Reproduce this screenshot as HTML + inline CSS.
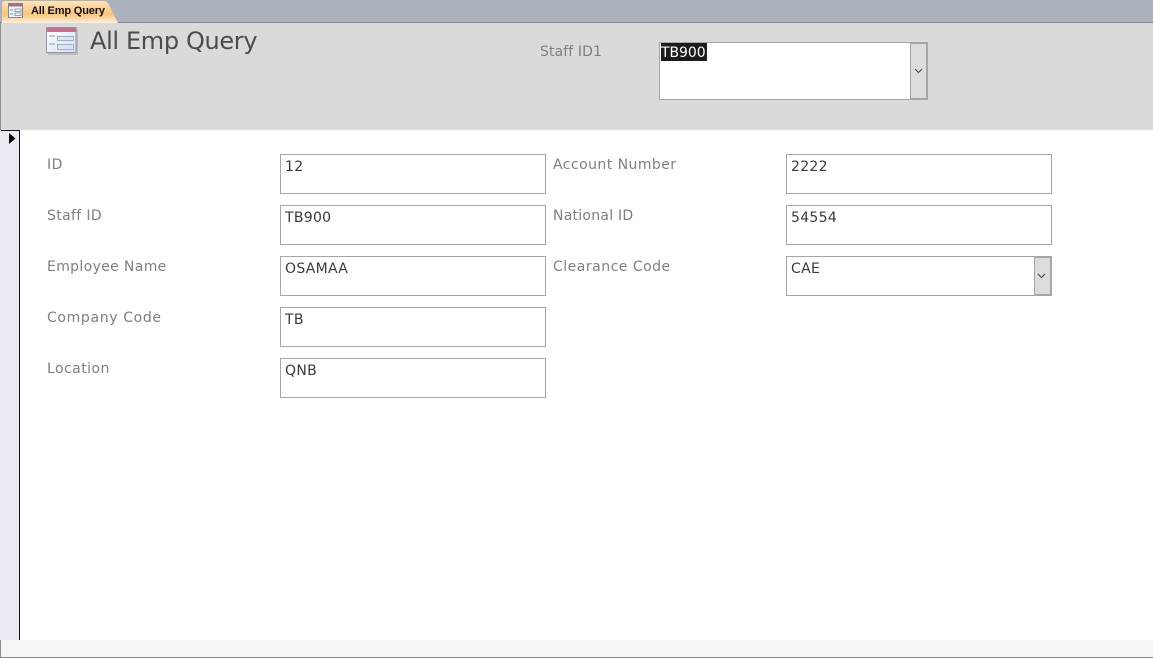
<!DOCTYPE html>
<html><head><meta charset="utf-8"><style>
html,body{margin:0;padding:0}
body{width:1153px;height:658px;overflow:hidden;background:#fff;position:relative;font-family:"DejaVu Sans","Liberation Sans",sans-serif}
div{position:absolute;box-sizing:border-box}
svg{position:absolute;left:0;top:0}
.l{font-size:14px;color:#7f7f7f;line-height:18px;white-space:nowrap;letter-spacing:.45px}
.b{border:1px solid #a6a6a6;background:#fff;height:40px;width:266px;font-size:14px;color:#3a3a3a;padding:3px 0 0 4px;line-height:18px;letter-spacing:.3px}
</style></head><body>
<div style="left:0;top:0;width:1153px;height:23px;background:#abb2be;border-bottom:1px solid #858b96"></div>
<div style="left:0;top:23px;width:1153px;height:107px;background:#dadada"></div>
<div style="left:0;top:23px;width:1px;height:635px;background:#8c8c8c"></div>
<svg width="125" height="24"><defs><linearGradient id="t" x1="0" y1="0" x2="0" y2="1"><stop offset="0" stop-color="#fde3bb"/><stop offset=".6" stop-color="#fbc57c"/><stop offset="1" stop-color="#fdeed5"/></linearGradient></defs><path d="M2 23V4Q2 1 5 1H103Q107 1 109 5L118 23Z" fill="url(#t)"/></svg>
<svg width="24" height="20"><rect x="8.500" y="3.500" width="14" height="14" fill="#f4f6fb" stroke="#7e8795"/><rect x="9" y="4" width="13" height="2.500" fill="#b5687f"/><path d="M10 10h3M10 14h3" stroke="#6d7f9a"/><rect x="15" y="9" width="6" height="2.500" fill="#fff" stroke="#6d87a8" stroke-width=".8"/><rect x="15" y="13" width="6" height="2.500" fill="#fff" stroke="#6d87a8" stroke-width=".8"/></svg>
<div style="left:31px;top:4px;font:bold 11px/14px 'Liberation Sans',sans-serif;color:#111;white-space:nowrap;letter-spacing:-.15px">All Emp Query</div>
<svg width="80" height="60"><defs><linearGradient id="f" x1="0" y1="0" x2="1" y2="1"><stop offset="0" stop-color="#fff"/><stop offset="1" stop-color="#d6dfee"/></linearGradient></defs><rect x="48" y="29" width="30" height="26" fill="#a9a9a9" opacity=".6"/><rect x="46.500" y="27.500" width="29.500" height="25" fill="url(#f)" stroke="#8f98a8"/><rect x="47" y="28" width="29" height="4" fill="#c4708a"/><path d="M49 36h6M49 44h6" stroke="#a8b4c8" stroke-width="1.500"/><rect x="57.500" y="36.500" width="16" height="4" fill="#dbe4f1" stroke="#9fb0c8"/><rect x="57.500" y="44.500" width="16" height="5" fill="#dbe4f1" stroke="#9fb0c8"/></svg>
<div style="left:90px;top:26px;font-size:24px;line-height:30px;color:#4c4c4c;white-space:nowrap;letter-spacing:-.35px">All Emp Query</div>
<div class="l" style="left:540px;top:43px;color:#808080;letter-spacing:.1px">Staff ID1</div>
<div style="left:659px;top:42px;width:269px;height:58px;border:1px solid #a6a6a6;background:#fff"></div>
<div style="left:910px;top:42px;width:18px;height:58px;background:#dcdcdc;border:2px solid #a6a6a6;border-left:1px solid #a6a6a6"></div>
<svg width="1153" height="300" style="z-index:2"><path d="M915 69l3.500 3.500 3.500-3.500" fill="none" stroke="#444"/><path d="M1038 274l3.500 3.500 3.500-3.500" fill="none" stroke="#444"/></svg>
<div style="left:661px;top:43px;width:46px;height:18px;background:#1c1c1c;color:#fff;font-size:14px;line-height:20px;letter-spacing:-.05px;overflow:hidden;white-space:nowrap">TB900</div>
<div style="left:0;top:130px;width:20px;height:510px;background:#e8ebf2;border-right:1px solid #111"></div>
<div style="left:1px;top:130px;width:19px;height:1px;background:#111"></div>
<svg width="20" height="150"><path d="M9 133l6.500 5.500-6.500 5.500z" fill="#000"/></svg>
<div style="left:0;top:640px;width:1153px;height:17px;background:#f5f5f5"></div>
<div style="left:0;top:657px;width:1153px;height:1px;background:#8c8c8c"></div>
<div style="left:0;top:640px;width:1px;height:18px;background:#8c8c8c"></div>

<div class="l" style="left:47px;top:156px">ID</div><div class="b" style="left:280px;top:154px">12</div>
<div class="l" style="left:47px;top:207px;letter-spacing:.35px">Staff ID</div><div class="b" style="left:280px;top:205px">TB900</div>
<div class="l" style="left:47px;top:258px;letter-spacing:.35px">Employee Name</div><div class="b" style="left:280px;top:256px">OSAMAA</div>
<div class="l" style="left:47px;top:309px;letter-spacing:.65px">Company Code</div><div class="b" style="left:280px;top:307px">TB</div>
<div class="l" style="left:47px;top:360px">Location</div><div class="b" style="left:280px;top:358px">QNB</div>

<div class="l" style="left:553px;top:156px">Account Number</div><div class="b" style="left:786px;top:154px">2222</div>
<div class="l" style="left:553px;top:207px;letter-spacing:.25px">National ID</div><div class="b" style="left:786px;top:205px">54554</div>
<div class="l" style="left:553px;top:258px;letter-spacing:.5px">Clearance Code</div><div class="b" style="left:786px;top:256px">CAE</div>
<div style="left:1034px;top:256px;width:18px;height:40px;background:#dcdcdc;border:2px solid #a6a6a6;border-left:1px solid #a6a6a6"></div>
</body></html>
